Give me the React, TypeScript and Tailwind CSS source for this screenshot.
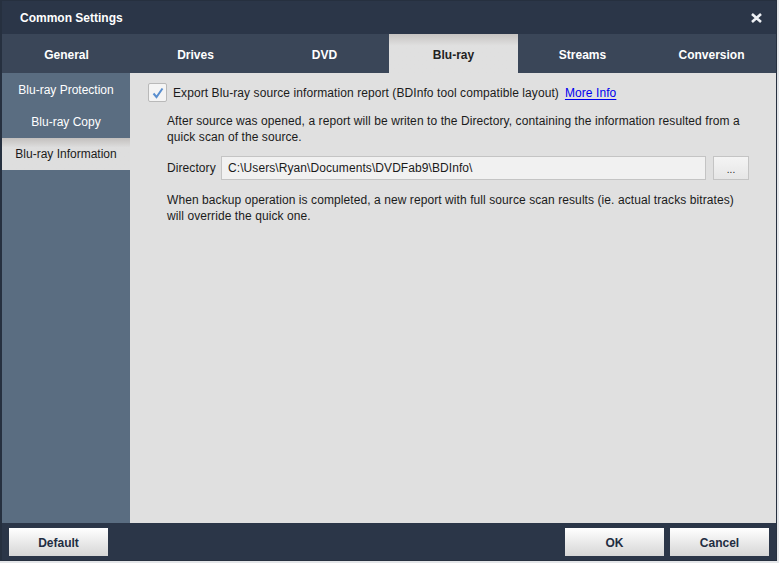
import React from "react";

const TABS = ["General", "Drives", "DVD", "Blu-ray", "Streams", "Conversion"];
const SIDE = ["Blu-ray Protection", "Blu-ray Copy", "Blu-ray Information"];

function Btn({ label }: { label: string }) {
  return (
    <button className="w-[99px] h-[28px] pt-[2px] bg-gradient-to-b from-[#ffffff] to-[#d6d6d6] text-[12px] font-bold text-[#1f2d42]">
      {label}
    </button>
  );
}

export default function App() {
  return (
    <div
      className="w-[779px] h-[563px] bg-[#e4e6e9] overflow-hidden text-[12px] text-[#1b1b1b]"
      style={{ fontFamily: '"Liberation Sans", Arial, sans-serif' }}
    >
      <div className="w-[777px] h-[561px] border-t border-b border-r border-l-2 border-[#26303f] bg-[#2b3648] flex flex-col">
        {/* title bar */}
        <div className="h-[33px] flex items-center justify-between pl-[18px] pr-[14px]">
          <span className="font-bold text-white">Common Settings</span>
          <svg width="11" height="10" viewBox="0 0 11 10">
            <path d="M1 1 L10 9 M10 1 L1 9" stroke="#eef1f5" strokeWidth="2.6" />
          </svg>
        </div>

        {/* tabs */}
        <div className="h-[39px] grid grid-cols-6 bg-[#3a4658]">
          {TABS.map((t) =>
            t === "Blu-ray" ? (
              <div
                key={t}
                className="flex items-center justify-center pt-[3px] font-bold text-[#222] bg-gradient-to-b from-[#c6c3c1] via-[#e0e0e0] via-30% to-[#e0e0e0]"
              >
                {t}
              </div>
            ) : (
              <div key={t} className="flex items-center justify-center pt-[3px] font-bold text-white">
                {t}
              </div>
            )
          )}
        </div>

        {/* body */}
        <div className="h-[450px] flex">
          <div className="w-[128px] bg-[#5a6d81] pt-[1px]">
            {SIDE.map((s) =>
              s === "Blu-ray Information" ? (
                <div
                  key={s}
                  className="h-[32px] flex items-center justify-center text-[#1b1b1b] bg-gradient-to-b from-[#c3c0be] via-[#dedede] via-30% to-[#dedede]"
                >
                  {s}
                </div>
              ) : (
                <div key={s} className="h-[32px] flex items-center justify-center text-white">
                  {s}
                </div>
              )
            )}
          </div>

          <div className="flex-1 bg-[#e0e0e0] pl-[18px] pr-[20px] pt-[10px] tracking-[0.08px]">
            <div className="flex items-center h-[19px]">
              <div className="w-[19px] h-[19px] rounded-[2px] border border-[#b9b9b9] bg-[#f4f4f4] flex items-center justify-center">
                <svg width="12" height="12" viewBox="0 0 12 12">
                  <path d="M1.5 6.5 L4.5 10 L10.5 1.5" fill="none" stroke="#5a8fcf" strokeWidth="2" />
                </svg>
              </div>
              <span className="ml-[6px]">
                Export Blu-ray source information report (BDInfo tool compatible layout)
              </span>
              <a className="ml-[6px] text-[#0000ee] underline underline-offset-2">More Info</a>
            </div>

            <div className="pl-[19px]">
              <p className="mt-[11px] leading-[16px] whitespace-nowrap">
                After source was opened, a report will be writen to the Directory, containing the information resulted from a
                <br />
                quick scan of the source.
              </p>

              <div className="mt-[11px] flex items-center">
                <span className="w-[54px]">Directory</span>
                <div className="w-[485px] h-[24px] border border-[#c4c4c4] bg-[#f1f1f1] flex items-center px-[6px]">
                  C:\Users\Ryan\Documents\DVDFab9\BDInfo\
                </div>
                <div className="ml-[7px] w-[36px] h-[24px] border border-[#c4c4c4] bg-gradient-to-b from-[#f4f4f4] to-[#e6e6e6] flex items-center justify-center text-[10px] pt-[3px]">
                  ...
                </div>
              </div>

              <p className="mt-[12px] leading-[16px] whitespace-nowrap">
                When backup operation is completed, a new report with full source scan results (ie. actual tracks bitrates)
                <br />
                will override the quick one.
              </p>
            </div>
          </div>
        </div>

        {/* bottom bar */}
        <div className="flex-1 flex items-start pt-[5px] px-[7px]">
          <Btn label="Default" />
          <div className="flex-1" />
          <Btn label="OK" />
          <div className="w-[6px]" />
          <Btn label="Cancel" />
        </div>
      </div>
    </div>
  );
}
